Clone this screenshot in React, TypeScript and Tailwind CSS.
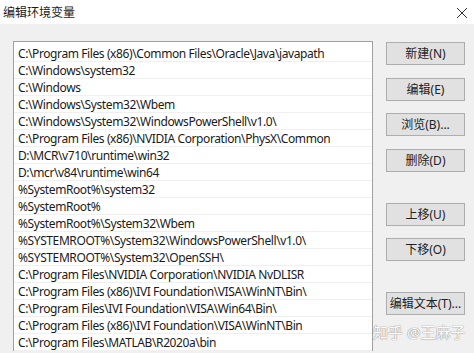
import React from 'react'

const paths = [
  'C:\\Program Files (x86)\\Common Files\\Oracle\\Java\\javapath',
  'C:\\Windows\\system32',
  'C:\\Windows',
  'C:\\Windows\\System32\\Wbem',
  'C:\\Windows\\System32\\WindowsPowerShell\\v1.0\\',
  'C:\\Program Files (x86)\\NVIDIA Corporation\\PhysX\\Common',
  'D:\\MCR\\v710\\runtime\\win32',
  'D:\\mcr\\v84\\runtime\\win64',
  '%SystemRoot%\\system32',
  '%SystemRoot%',
  '%SystemRoot%\\System32\\Wbem',
  '%SYSTEMROOT%\\System32\\WindowsPowerShell\\v1.0\\',
  '%SYSTEMROOT%\\System32\\OpenSSH\\',
  'C:\\Program Files\\NVIDIA Corporation\\NVIDIA NvDLISR',
  'C:\\Program Files (x86)\\IVI Foundation\\VISA\\WinNT\\Bin\\',
  'C:\\Program Files\\IVI Foundation\\VISA\\Win64\\Bin\\',
  'C:\\Program Files (x86)\\IVI Foundation\\VISA\\WinNT\\Bin',
  'C:\\Program Files\\MATLAB\\R2020a\\bin',
]

const Btn = ({ label, className = '' }: { label: string; className?: string }) => (
  <div
    className={`flex h-[23px] w-[79px] items-center justify-center border border-[#adadad] bg-[#e1e1e1] text-[12px] text-[#222] ${className}`}
  >
    {label}
  </div>
)

export default function App() {
  return (
    <div
      className="relative flex h-[353px] w-[474px] flex-col overflow-hidden bg-[#f0f0f0] text-[#1a1a1a]"
      style={{ fontFamily: '"Noto Sans", "Noto Sans CJK SC", sans-serif' }}
    >
      <div className="flex h-[24px] shrink-0 items-center justify-between bg-white pl-[3px] pr-[6px] pt-[1px]">
        <span className="text-[12px]">编辑环境变量</span>
        <svg width="12" height="12" viewBox="0 0 12 12" className="text-[#333]">
          <path d="M1 1 L11 11 M11 1 L1 11" stroke="currentColor" strokeWidth="1" />
        </svg>
      </div>
      <div className="flex pl-[13px] pt-[17px]">
        <div className="w-[360px] shrink-0 border border-b-0 border-[#a0a0a0] bg-white pt-[3px]">
          {paths.map((p) => (
            <div
              key={p}
              className="h-[17px] whitespace-nowrap border-b border-[#f0f0f0] pl-[4px] text-[12px] leading-[17px] tracking-[-0.4px]"
            >
              {p}
            </div>
          ))}
        </div>
        <div className="ml-[13px] flex flex-col pt-[1px]">
          <Btn label="新建(N)" />
          <Btn label="编辑(E)" className="mt-[13px]" />
          <Btn label="浏览(B)..." className="mt-[12px]" />
          <Btn label="删除(D)" className="mt-[13px]" />
          <Btn label="上移(U)" className="mt-[31px]" />
          <Btn label="下移(O)" className="mt-[12px]" />
          <Btn label="编辑文本(T)..." className="mt-[31px]" />
          <div className="relative z-10 ml-[-13px] mt-[6px] whitespace-nowrap text-[15px] text-white [text-shadow:0_0_1px_#888,0_0_1px_#888]">
            知乎 @王麻子
          </div>
        </div>
      </div>
    </div>
  )
}
